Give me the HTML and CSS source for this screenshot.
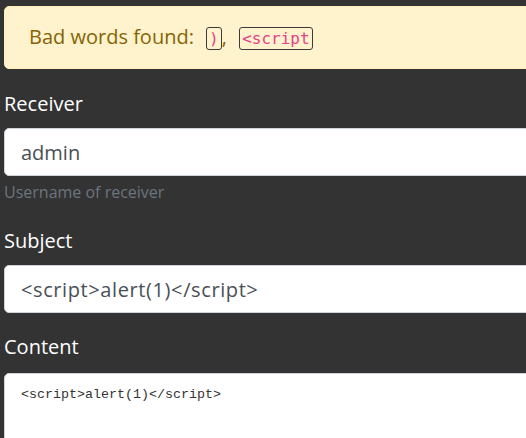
FILE: index.html
```html
<!DOCTYPE html>
<html lang="en">
<head>
<meta charset="utf-8">
<title>Send message</title>
<link rel="stylesheet" href="styles.css">
</head>
<body>
<div class="page">
  <div class="alert">Bad words found: <code class="bad">)</code>, <code class="bad">&lt;script</code></div>
  <form class="form">
    <div class="group">
      <label class="label" for="receiver">Receiver</label>
      <input class="control" id="receiver" type="text" value="admin">
      <small class="help">Username of receiver</small>
    </div>
    <div class="group group-subject">
      <label class="label" for="subject">Subject</label>
      <input class="control control-wide" id="subject" type="text" value="&lt;script&gt;alert(1)&lt;/script&gt;">
    </div>
    <div class="group group-content">
      <label class="label" for="content">Content</label>
      <textarea class="control area" id="content">&lt;script&gt;alert(1)&lt;/script&gt;</textarea>
    </div>
  </form>
</div>
</body>
</html>
```

FILE: styles.css
```css
html, body {
  margin: 0;
  padding: 0;
  background: #333333;
  overflow: hidden;
}

body {
  font-family: "Open Sans", "Noto Sans", sans-serif;
  font-size: 20px;
  line-height: 30px;
  color: #ffffff;
}

.page {
  width: 760px;
  padding: 6px 0 0 4px;
}

.alert {
  background: #fff3cd;
  border: 1px solid #ffeeba;
  border-radius: 5px;
  color: #856404;
  padding: 15px 24px 16px;
  line-height: 30px;
}

.bad {
  font-family: "DejaVu Sans Mono", "Liberation Mono", monospace;
  font-size: 16px;
  line-height: 16px;
  color: #e83e8c;
  border: 1px solid #3a3a3a;
  border-radius: 3px;
  padding: 1px 2px;
  margin-left: 7px;
}

.form {
  display: flex;
  flex-direction: column;
  margin-top: 20px;
}

.group {
  display: flex;
  flex-direction: column;
  margin-bottom: 22px;
}

.group-subject {
  margin-bottom: 19px;
}

.label {
  display: block;
  font-size: 20px;
  line-height: 30px;
  margin-bottom: 9px;
  color: #ffffff;
}

.group-content .label {
  margin-bottom: 11px;
}

.control {
  display: block;
  box-sizing: border-box;
  width: 100%;
  height: 48px;
  margin: 0;
  padding: 8px 16px;
  font-family: "Open Sans", "Noto Sans", sans-serif;
  font-size: 20px;
  line-height: 30px;
  color: #495057;
  background: #ffffff;
  border: 1px solid #ced4da;
  border-radius: 5px;
  outline: none;
}

.control-wide {
  letter-spacing: 0.6px;
}

.area {
  height: 160px;
  padding: 11px 16px 8px;
  font-family: "Liberation Mono", "DejaVu Sans Mono", monospace;
  font-size: 13.33px;
  line-height: 20px;
  color: #333333;
  resize: none;
}

.help {
  display: block;
  margin-top: 4px;
  font-size: 16px;
  line-height: 24px;
  color: #6c757d;
}
```
